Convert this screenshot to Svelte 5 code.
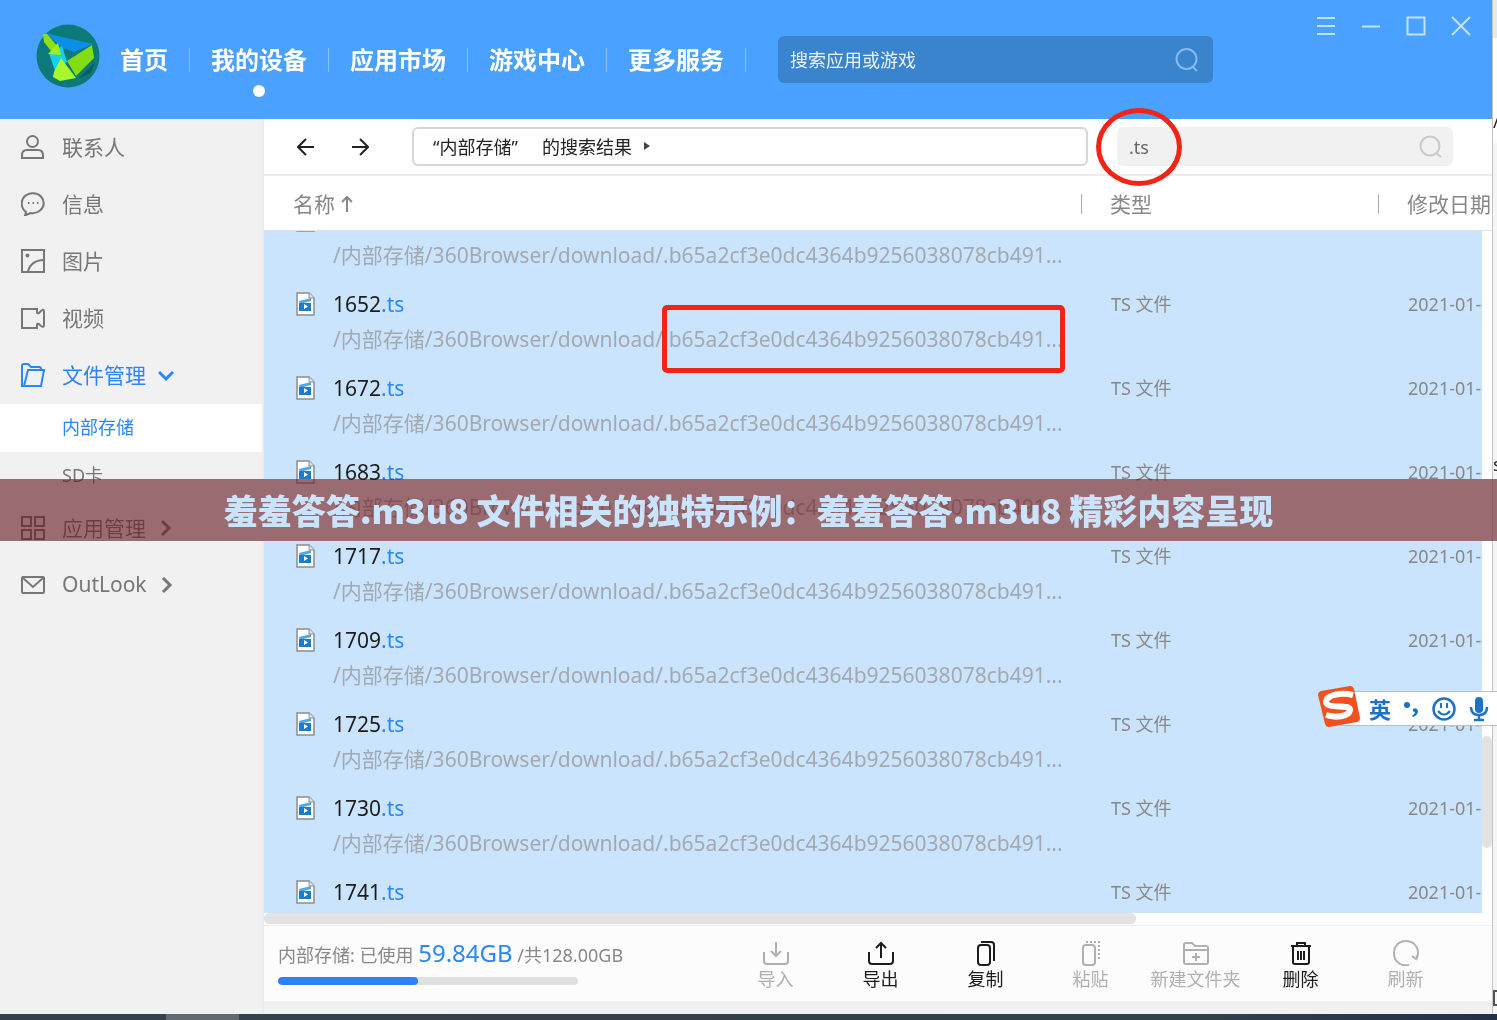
<script>
    import { onMount } from "svelte";

    const tabs = ["首页", "我的设备", "应用市场", "游戏中心", "更多服务"];
    let activeTab = "我的设备";

    const menu = [
        { label: "联系人", icon: "contact" },
        { label: "信息", icon: "message" },
        { label: "图片", icon: "picture" },
        { label: "视频", icon: "video" },
        { label: "文件管理", icon: "folder", active: true, arrow: "down", children: ["内部存储", "SD卡"] },
        { label: "应用管理", icon: "apps", arrow: "right" },
        { label: "OutLook", icon: "mail", arrow: "right" },
    ];
    let activeChild = "内部存储";

    const path = "/内部存储/360Browser/download/.b65a2cf3e0dc4364b9256038078cb491...";
    const files = ["1641", "1652", "1672", "1683", "1717", "1709", "1725", "1730", "1741"];
    const marked = "1652";

    const actions = [
        { label: "导入", icon: "import", enabled: false },
        { label: "导出", icon: "export", enabled: true },
        { label: "复制", icon: "copy", enabled: true },
        { label: "粘贴", icon: "paste", enabled: false },
        { label: "新建文件夹", icon: "newfolder", enabled: false },
        { label: "删除", icon: "delete", enabled: true },
        { label: "刷新", icon: "refresh", enabled: false },
    ];

    let used = 59.84;
    let total = 128;
    let appSearch = "";
    let fileSearch = ".ts";
    let list;

    onMount(() => {
        list.scrollTop = 32;
    });
</script>

<div class="screen">
    <div class="desktop">
        <div class="app">
            <header>
                <svg class="logo" viewBox="0 0 64 64">
                    <circle cx="32" cy="32" r="31.5" fill="#0b7a78" />
                    <path d="M42 55 L59 38 L55 49 Z" fill="#075c62" />
                    <path d="M9 9 L57 20 L38 28 L27 24 Z" fill="#0b8ee8" />
                    <path d="M13 29 L26 22 L31 38 L19 47 Z" fill="#14d2ee" />
                    <path d="M7 10 L11 10 L23 24 L15 27 L8 18 Z" fill="#8fe010" />
                    <path d="M12 30 L22 19 L25 31 Z" fill="#9df01c" />
                    <path d="M31 37 L56 21 L58 34 L40 52 Z" fill="#84dc12" />
                    <path d="M25 34 L40 54 L24 57 L17 53 L18 48 Z" fill="#a8f82c" />
                </svg>
                <nav>
                    {#each tabs as tab}
                        <a href="#top" class:current={tab === activeTab} on:click={() => (activeTab = tab)}>{tab}</a>
                    {/each}
                </nav>
                <label class="app-search">
                    <input type="text" aria-label="搜索" placeholder="搜索应用或游戏" bind:value={appSearch} />
                    <svg width="26" height="26" viewBox="0 0 26 26" fill="none" stroke="currentColor" stroke-width="2">
                        <circle cx="12.500" cy="12" r="10" />
                        <path d="M19 20 L23 24" />
                    </svg>
                </label>
                <div class="window-buttons">
                    <button type="button" aria-label="菜单">
                        <svg width="20" height="20" viewBox="0 0 20 20"><path d="M1 2H19M1 10H19M1 18H19" /></svg>
                    </button>
                    <button type="button" aria-label="最小化">
                        <svg width="20" height="20" viewBox="0 0 20 20"><path d="M1 10.500H19" /></svg>
                    </button>
                    <button type="button" aria-label="最大化">
                        <svg width="20" height="20" viewBox="0 0 20 20"><path d="M1.500 1.500H18.500V18.500H1.500Z" /></svg>
                    </button>
                    <button type="button" aria-label="关闭">
                        <svg width="20" height="20" viewBox="0 0 20 20"><path d="M1 1L19 19M19 1L1 19" /></svg>
                    </button>
                </div>
            </header>

            <div class="body">
                <aside>
                    {#each menu as item}
                        <button type="button" class="menu-item" class:active={item.active}>
                            <svg width="24" height="24" viewBox="0 0 24 24">
                                {#if item.icon === "contact"}
                                    <circle cx="11.500" cy="6.500" r="5.500" />
                                    <path d="M1 23V20Q1 15 6 15H17Q22 15 22 20V23Z" />
                                {:else if item.icon === "message"}
                                    <path d="M5 20C-1 15 0 8 3.500 4.500C8 0 16 0 20 4.500C24 9 23.500 15 19 18.500C16 21 12 21.500 9.500 21L4 23.500Z" />
                                    <path d="M7 11H8.500M11.500 11H13M16 11H17.500" />
                                {:else if item.icon === "picture"}
                                    <path d="M1 1H23V23H1Z" />
                                    <circle cx="6.500" cy="6.500" r="1" />
                                    <path d="M7 23C8 16 14 11 23 11" />
                                {:else if item.icon === "video"}
                                    <path d="M1 3H16V6Q16 8 18 7L20 5Q23 2 23 6V19Q23 22 20 20L18 18Q16 17 16 19V22H1Z" />
                                {:else if item.icon === "folder"}
                                    <path d="M3 23H1V3Q1 1 3 1H7L10 4H18Q20 4 20 6V7" />
                                    <path d="M7 7H23L20 23H3Z" />
                                {:else if item.icon === "apps"}
                                    <path d="M1 1H10V10H1ZM14 1H23V10H14ZM1 14H10V23H1ZM14 14H23V23H14Z" />
                                {:else}
                                    <rect x="1" y="4" width="22" height="16" rx="1" />
                                    <path d="M2 5L12 14L22 5" />
                                {/if}
                            </svg>
                            <span>{item.label}</span>
                            {#if item.arrow === "down"}
                                <svg class="arrow" width="16" height="16" viewBox="0 0 16 16"><path d="M1 5L8 12L15 5" /></svg>
                            {:else if item.arrow}
                                <svg class="arrow" width="16" height="16" viewBox="0 0 16 16"><path d="M4 1L11 8L4 15" /></svg>
                            {/if}
                        </button>
                        {#each item.children || [] as child}
                            <button type="button" class="sub-item" class:active={child === activeChild} on:click={() => (activeChild = child)}>{child}</button>
                        {/each}
                    {/each}
                </aside>

                <main>
                    <div class="toolbar">
                        <button type="button" class="step" aria-label="后退">
                            <svg width="18" height="18" viewBox="0 0 18 18"><path d="M17 9H2M9 1L1 9L9 17" /></svg>
                        </button>
                        <button type="button" class="step" aria-label="前进">
                            <svg width="18" height="18" viewBox="0 0 18 18"><path d="M1 9H16M9 1L17 9L9 17" /></svg>
                        </button>
                        <div class="location">
                            <span>“内部存储”</span>
                            <span>的搜索结果</span>
                            <i></i>
                        </div>
                        <label class="file-search">
                            <input type="text" aria-label="搜索文件" bind:value={fileSearch} />
                            <svg width="24" height="24" viewBox="0 0 24 24" fill="none" stroke="currentColor" stroke-width="2">
                                <circle cx="11" cy="11" r="9.500" />
                                <path d="M17 18L22 22" />
                            </svg>
                            <span class="ring"></span>
                        </label>
                    </div>

                    <div class="files">
                        <div class="list" bind:this={list}>
                            <table>
                                <thead>
                                    <tr>
                                        <th>名称 <svg width="12" height="16" viewBox="0 0 12 16"><path d="M6 16V1M1 6L6 1L11 6" /></svg></th>
                                        <th class="type">类型</th>
                                        <th class="date">修改日期</th>
                                    </tr>
                                </thead>
                                <tbody>
                                    {#each files as file}
                                        <tr>
                                            <td>
                                                <div class="name">
                                                    <svg width="19" height="24" viewBox="0 0 19 24">
                                                        <path d="M1 1H13L18 6V23H1Z" fill="#fff" stroke="#8a8d90" stroke-width="1.500" />
                                                        <path d="M13 1V6H18" fill="#e4e6e8" stroke="#8a8d90" />
                                                        <path d="M3 9L15 6V9L4 12Z" fill="#4aa9e8" />
                                                        <path d="M3 11H15V19H3Z" fill="#1c7cc9" />
                                                        <path d="M8 12L12 14.500L8 17Z" fill="#fff" />
                                                    </svg>
                                                    <span>{file}<b>.ts</b></span>
                                                </div>
                                                <div class="path">
                                                    {path}
                                                    {#if file === marked}<span class="mark"></span>{/if}
                                                </div>
                                            </td>
                                            <td>TS 文件</td>
                                            <td>2021-01-14</td>
                                        </tr>
                                    {/each}
                                </tbody>
                            </table>
                        </div>
                        <div class="track"><span></span></div>
                    </div>
                    <div class="h-track"><span></span></div>

                    <footer>
                        <div class="storage">
                            <p>内部存储: 已使用 <strong>{used}GB</strong> /共{total.toFixed(2)}GB</p>
                            <div class="bar"><span style="width: {(used / total) * 100}%"></span></div>
                        </div>
                        <div class="actions">
                            {#each actions as action}
                                <button type="button" disabled={!action.enabled}>
                                    <svg width="26" height="26" viewBox="0 0 26 26">
                                        {#if action.icon === "import"}
                                            <path d="M1 12V21Q1 24 4 24H22Q25 24 25 21V12M13 2V16M8 11L13 16L18 11" />
                                        {:else if action.icon === "export"}
                                            <path d="M1 12V21Q1 24 4 24H22Q25 24 25 21V12M13 18V3M8 8L13 3L18 8" />
                                        {:else if action.icon === "copy"}
                                            <rect x="5" y="5" width="12" height="20" rx="3" />
                                            <path d="M8 2H18Q21 2 21 5V21" />
                                        {:else if action.icon === "paste"}
                                            <rect x="5" y="5" width="12" height="20" rx="3" />
                                            <path d="M8 2H21V21" stroke-dasharray="2 2" />
                                        {:else if action.icon === "newfolder"}
                                            <path d="M3 24Q1 24 1 22V5Q1 3 3 3H9L12 6H23Q25 6 25 8V22Q25 24 23 24ZM1 10H25M13 13V21M9 17H17" />
                                        {:else if action.icon === "delete"}
                                            <path d="M3 6H23M9 6V3H17V6M5 6V22Q5 24 7 24H19Q21 24 21 22V6M10 11V20M13 11V20M16 11V20" />
                                        {:else}
                                            <path d="M16 25C6 27 1 20 1 13C1 6 6 1 13 1C20 1 25 6 25 13C25 15 24.500 17 23.500 19M19 16L23 19L25 14" />
                                        {/if}
                                    </svg>
                                    {action.label}
                                </button>
                            {/each}
                        </div>
                    </footer>
                </main>
            </div>
        </div>
        <div class="behind">
            <span class="slash">/</span>
            <span class="letter">s</span>
            <span class="box"></span>
        </div>
    </div>
    <div class="taskbar"><span></span></div>

    <div class="ime">
        <svg class="sogou" width="44" height="44" viewBox="0 0 44 44">
            <path d="M4 6L33 1Q36 1 37 4L43 33Q43 36 40 37L12 42Q9 42 8 39L1 10Q1 7 4 6Z" fill="#f1511f" />
            <path d="M36 10C24 7 9 10 9 17C10 25 33 18 33 25C32 32 18 33 9 30" fill="none" stroke="#fff" stroke-width="6" />
        </svg>
        <span>英</span>
        <svg width="16" height="18" viewBox="0 0 16 18">
            <circle cx="4" cy="5" r="3" />
            <path d="M10 9Q14 7 15 11Q15 15 10 17L9 16Q12 14 12 12Q9 12 10 9Z" />
        </svg>
        <svg width="26" height="26" viewBox="0 0 26 26">
            <circle cx="13" cy="13" r="10.500" fill="none" stroke="#1c72c4" stroke-width="2.500" />
            <path d="M9 7H11V12H9ZM15 7H17V12H15Z" />
            <path d="M7 15Q13 22 19 15" fill="none" stroke="#1c72c4" stroke-width="2" />
        </svg>
        <svg width="20" height="26" viewBox="0 0 20 26">
            <rect x="6" y="1" width="8" height="16" rx="4" />
            <path d="M2 11Q2 19 10 19Q18 19 18 11M10 19V23M5 24H15" fill="none" stroke="#1c72c4" stroke-width="2.500" />
        </svg>
    </div>

    <div class="banner">羞羞答答.m3u8 文件相关的独特示例：羞羞答答.m3u8 精彩内容呈现</div>
</div>

<style>
    :global(body) {
        margin: 0;
        overflow: hidden;
    }
    .screen {
        position: relative;
        display: flex;
        flex-direction: column;
        height: 100vh;
        overflow: hidden;
        color: #777;
        font-family: "Noto Sans", "Noto Sans CJK SC", sans-serif;
        font-size: 18px;
    }
    .screen * {
        box-sizing: border-box;
    }
    button,
    input {
        padding: 0;
        border: 0;
        outline: 0;
        background: none;
        color: inherit;
        font: inherit;
    }
    svg {
        flex: none;
    }
    .desktop {
        display: flex;
        flex: 1;
        min-height: 0;
    }
    .app {
        display: flex;
        flex: 1;
        flex-direction: column;
        min-width: 0;
        background: #f1f1f1;
    }

    header {
        display: flex;
        height: 119px;
        padding-left: 36px;
        background: #4aa1ff;
        color: #fff;
    }
    .logo {
        width: 64px;
        height: 64px;
        margin-top: 24px;
    }
    nav {
        display: flex;
        align-items: center;
        height: 119px;
        margin-left: -1px;
    }
    nav a {
        position: relative;
        padding: 0 21px;
        border-right: 1px solid #86c1ff;
        color: #fff;
        font-size: 24px;
        font-weight: bold;
        line-height: 24px;
        text-decoration: none;
        white-space: nowrap;
    }
    nav a.current::after {
        position: absolute;
        top: 37px;
        left: 50%;
        width: 12px;
        height: 12px;
        margin-left: -6px;
        border-radius: 50%;
        background: #fff;
        content: "";
    }
    .app-search {
        display: flex;
        align-items: center;
        width: 435px;
        height: 47px;
        margin: 36px 0 0 32px;
        padding: 0 13px 0 12px;
        border-radius: 6px;
        background: #3a83cd;
        color: #82bbf5;
    }
    .app-search input {
        flex: 1;
        min-width: 0;
        color: #fff;
    }
    .app-search input::placeholder {
        color: #e8f3ff;
        opacity: 1;
    }
    .window-buttons {
        display: flex;
        gap: 25px;
        margin: 16px 21px 0 auto;
    }
    .window-buttons button {
        width: 20px;
        height: 20px;
    }
    .window-buttons svg {
        display: block;
        fill: none;
        stroke: #c4e2ff;
        stroke-width: 2;
    }

    .body {
        display: flex;
        flex: 1;
        min-height: 0;
    }
    aside {
        display: flex;
        flex-direction: column;
        width: 264px;
        border-right: 2px solid #eaecef;
    }
    .menu-item {
        display: flex;
        align-items: center;
        height: 57px;
        padding: 0 0 2px 21px;
        font-size: 21px;
        text-align: left;
    }
    .menu-item svg {
        fill: none;
        stroke: currentColor;
        stroke-width: 2;
    }
    .menu-item span {
        margin-left: 17px;
        padding-bottom: 2px;
    }
    .menu-item .arrow {
        margin-left: 12px;
        stroke-width: 3;
    }
    .sub-item {
        height: 48px;
        padding: 0 0 4px 62px;
        text-align: left;
    }
    .sub-item.active {
        background: #fff;
    }
    .active {
        color: #2a86fb;
    }

    main {
        display: flex;
        flex: 1;
        flex-direction: column;
        min-width: 0;
        margin-bottom: 13px;
        background: #fff;
    }
    .toolbar {
        display: flex;
        align-items: center;
        height: 57px;
        padding: 0 39px 0 33px;
        border-bottom: 2px solid #ececec;
    }
    .step {
        width: 18px;
        height: 18px;
        margin-right: 36px;
    }
    .step svg {
        display: block;
        fill: none;
        stroke: #222;
        stroke-width: 2;
    }
    .location {
        display: flex;
        flex: 1;
        align-items: center;
        height: 39px;
        margin: 0 29px 0 7px;
        padding: 0 0 2px 19px;
        border: 2px solid #d6d6d6;
        border-radius: 6px;
        color: #222;
        white-space: nowrap;
    }
    .location span {
        margin-right: 24px;
    }
    .location i {
        margin-left: -12px;
        border: 4px solid transparent;
        border-right: 0;
        border-left: 6px solid #444;
    }
    .file-search {
        position: relative;
        z-index: 2;
        display: flex;
        align-items: center;
        width: 336px;
        height: 39px;
        padding: 0 10px 0 12px;
        border-radius: 6px;
        background: #f1f1f1;
        color: #c8c8c8;
    }
    .file-search input {
        flex: 1;
        min-width: 0;
        color: #666;
    }
    .ring {
        position: absolute;
        top: -19px;
        left: -21px;
        width: 86px;
        height: 78px;
        border: 5px solid #f22416;
        border-radius: 50%;
    }

    .files {
        position: relative;
        flex: 1;
        min-height: 0;
    }
    .list {
        height: 100%;
        overflow: auto;
        scrollbar-width: none;
    }
    table {
        width: calc(100% + 100px);
        border-spacing: 0;
        table-layout: fixed;
    }
    th {
        position: sticky;
        z-index: 1;
        top: 0;
        height: 55px;
        padding: 0 0 0 29px;
        border-bottom: 1px solid #e0e3e6;
        background: #fff;
        color: #888;
        font-size: 21px;
        font-weight: normal;
        text-align: left;
    }
    th svg {
        margin-left: 1px;
        fill: none;
        stroke: #888;
        stroke-width: 2;
    }
    .type {
        width: 297px;
    }
    .date {
        width: 214px;
    }
    .type::before,
    .date::before {
        position: absolute;
        top: 18px;
        left: 0;
        width: 1px;
        height: 20px;
        background: #aaa;
        content: "";
    }
    td {
        height: 84px;
        padding: 8px 0 0 30px;
        background: #cbe4fe;
        color: #888;
        line-height: 26px;
        vertical-align: top;
    }
    .name {
        display: flex;
        align-items: center;
        gap: 18px;
        padding-left: 2px;
        color: #1c1c1c;
        font-size: 21px;
    }
    .name b {
        color: #2a86fb;
        font-weight: normal;
    }
    .path {
        position: relative;
        margin: 9px 0 0 39px;
        color: #a3a9b0;
        font-size: 21px;
        white-space: nowrap;
    }
    .mark {
        position: absolute;
        top: -21px;
        left: 329px;
        width: 403px;
        height: 68px;
        border: 5px solid #f22416;
        border-radius: 5px;
    }
    .track {
        position: absolute;
        z-index: 2;
        top: 55px;
        right: 0;
        bottom: 0;
        width: 10px;
        background: #fff;
    }
    .track span {
        position: absolute;
        top: 74%;
        width: 100%;
        height: 112px;
        border-radius: 5px;
        background: #e2e2e2;
    }
    .h-track {
        height: 12px;
    }
    .h-track span {
        display: block;
        width: 71%;
        height: 11px;
        border-radius: 5px;
        background: #e2e2e2;
    }

    footer {
        display: flex;
        justify-content: space-between;
        height: 76px;
        padding: 0 34px 0 14px;
        border-top: 1px solid #eee;
        background: #fcfcfc;
    }
    .storage p {
        margin: 11px 0 0;
        color: #888;
        line-height: 32px;
        white-space: nowrap;
    }
    .storage strong {
        color: #2a86fb;
        font-size: 24px;
        font-weight: normal;
    }
    .bar {
        width: 300px;
        height: 8px;
        margin-top: 6px;
        overflow: hidden;
        border-radius: 4px;
        background: #e0e0e0;
    }
    .bar span {
        display: block;
        height: 100%;
        border-radius: 4px;
        background: #2f80f8;
    }
    .actions {
        display: flex;
    }
    .actions button {
        display: flex;
        flex-direction: column;
        align-items: center;
        width: 105px;
        padding-top: 14px;
        color: #1c1c1c;
        line-height: 26px;
    }
    .actions button:disabled {
        color: #b0b0b0;
    }
    .actions svg {
        fill: none;
        stroke: currentColor;
        stroke-width: 2;
    }

    .behind {
        position: relative;
        width: 5px;
        overflow: hidden;
        border-left: 1px solid #c4c4c4;
        background: linear-gradient(#e8e8e8 38px, #fff 38px, #fff 143px, #f5f5f5 143px);
        color: #222;
    }
    .behind span {
        position: absolute;
        left: 0;
    }
    .slash {
        top: 109px;
    }
    .letter {
        top: 452px;
    }
    .box {
        top: 990px;
        width: 12px;
        height: 16px;
        border: 2px solid #555;
    }
    .taskbar {
        height: 6px;
        padding-left: 166px;
        background: linear-gradient(to right, #34434c, #333f4c 80%, #252f4a);
    }
    .taskbar span {
        display: block;
        width: 73px;
        height: 6px;
        background: #606a70;
    }

    .ime {
        position: absolute;
        z-index: 3;
        top: 691px;
        right: 0;
        display: flex;
        align-items: center;
        gap: 12px;
        height: 35px;
        padding-right: 8px;
        border: 1px solid #b4c0cc;
        border-width: 1px 0;
        background: #fff;
        color: #1c72c4;
        font-size: 22px;
        font-weight: bold;
        line-height: 30px;
        fill: #1c72c4;
    }
    .sogou {
        margin: 0 -4px 3px -22px;
    }

    .banner {
        position: absolute;
        z-index: 3;
        top: 479px;
        right: 0;
        left: 0;
        height: 62px;
        background: rgba(87, 8, 18, 0.6);
        color: #cbe4fe;
        font-family: "Noto Sans CJK SC", sans-serif;
        font-size: 34px;
        font-weight: 900;
        line-height: 62px;
        text-align: center;
        white-space: nowrap;
        backdrop-filter: grayscale(1) brightness(1.15);
    }
</style>
